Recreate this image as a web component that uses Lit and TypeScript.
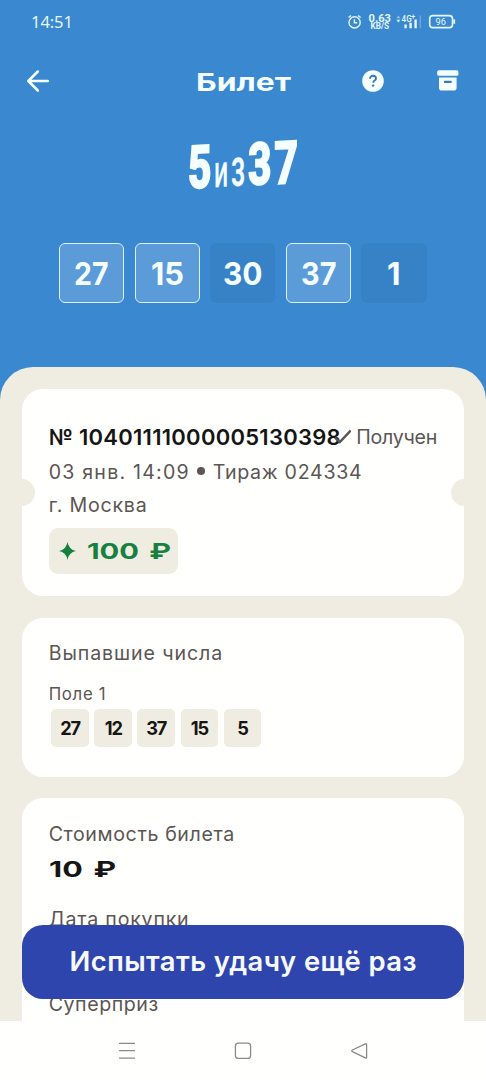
import { LitElement, html, css, svg } from "lit";
import { customElement, property } from "lit/decorators.js";

/** One line of text set to a given advance width, by tracking or by stretching. */
@customElement("fit-text")
class FitText extends LitElement {
  @property({ type: Number }) width = 100;
  @property() mode = "track";
  @property() text = "";

  static styles = css`
    :host { display: inline-block; white-space: pre; }
    .run { display: inline-block; transform-origin: 0 50%; }
  `;

  updated() {
    const run = this.renderRoot.querySelector<HTMLElement>(".run")!;
    run.style.letterSpacing = this.mode === "track" ? "0px" : "";
    run.style.transform = "";
    const natural = run.getBoundingClientRect().width;
    if (this.mode === "track") {
      run.style.letterSpacing = (this.width - natural) / Math.max(1, this.text.length - 1) + "px";
    } else {
      run.style.transform = `scaleX(${this.width / natural})`;
    }
    this.style.width = this.width + "px";
  }

  render() {
    return html`<span class="run">${this.text}</span>`;
  }
}

const track = (text: string, width: number, cls = "") =>
  html`<fit-text class=${cls} .text=${text} .width=${width}></fit-text>`;
const stretch = (text: string, width: number, cls = "") =>
  html`<fit-text class=${cls} mode="stretch" .text=${text} .width=${width}></fit-text>`;

@customElement("status-bar")
class StatusBar extends LitElement {
  static styles = css`
    :host { display: flex; height: 43px; align-items: center; padding: 0 30px 0 31px; color: #e4f7fb; box-sizing: border-box; }
    .time { font-family: "Noto Sans", sans-serif; font-size: 16.6px; flex: 1; }
    svg { display: block; overflow: visible; }
    text { font-family: Roboto, sans-serif; fill: #e4f7fb; }
  `;
  render() {
    return html`
      <span class="time">${track("14:51", 42)}</span>
      <svg width="110" height="24" viewBox="346 10 110 24" fill="none" stroke="#e4f7fb">
        <circle cx="354.600" cy="22.400" r="5.600" stroke-width="1.400" />
        <path d="M354.400 19.200v3.600h2.800M348.600 17.600l2.400-2.200M360.600 17.600l-2.400-2.200" stroke-width="1.400" />
        <g stroke="none">
          <text x="368.600" y="21.600" font-size="11.400" font-weight="700" textLength="22.400" lengthAdjust="spacingAndGlyphs">0.63</text>
          <text x="370.600" y="29.200" font-size="8.600" font-weight="700" textLength="18.600" lengthAdjust="spacingAndGlyphs">KB/S</text>
          <text x="401.600" y="22" font-size="8.800" font-weight="500" textLength="10" lengthAdjust="spacingAndGlyphs">4G</text>
          <text x="411.200" y="19.400" font-size="7" font-weight="700">+</text>
          <text x="435.600" y="25.400" font-size="9.800" textLength="10.400" lengthAdjust="spacingAndGlyphs">96</text>
        </g>
        <path d="M396.400 18.200l2-2.600 2 2.600z" fill="#93c2e6" stroke="none" />
        <path d="M396.400 19.800h4l-2 2.600z" fill="#e4f7fb" stroke="none" />
        <path d="M405.600 24.600v3.600M410.600 22.800v5.400M415.600 19.400v8.800" stroke-width="2.400" />
        <path d="M420.300 15.400v12.800" stroke="#6fa9dc" stroke-width="1.400" />
        <rect x="429.700" y="15.600" width="22.800" height="12" rx="3.200" stroke-width="1.600" />
        <path d="M454.200 19.400v4.400" stroke-width="1.800" />
      </svg>
    `;
  }
}

@customElement("game-logo")
class GameLogo extends LitElement {
  static styles = css`
    :host { display: block; height: 52px; }
    svg { display: block; margin: 0 auto; overflow: visible; }
    text { font-family: Roboto, sans-serif; fill: #f4feff; stroke: #f4feff; stroke-linejoin: miter; }
  `;
  glyph(ch: string, x: number, y: number, size: number, sx: number, weight: number, stroke: number) {
    return svg`<text transform="translate(${x} ${y}) skewY(-3) scale(${sx} 1)" font-size=${size} font-weight=${weight} stroke-width=${stroke}>${ch}</text>`;
  }
  render() {
    return html`
      <svg width="114" height="52" viewBox="186 139 114 52">
        ${this.glyph("5", 188, 188, 58.5, 0.69, 700, 2.6)}
        ${this.glyph("И", 214.6, 187.2, 34, 0.56, 700, 0.2)}
        ${this.glyph("З", 231.2, 186.2, 39.5, 0.56, 700, 0.2)}
        ${this.glyph("3", 248.2, 184.6, 57.5, 0.7, 700, 2.6)}
        ${this.glyph("7", 274.6, 183.4, 58, 0.7, 700, 2.6)}
      </svg>
    `;
  }
}

@customElement("app-root")
class AppRoot extends LitElement {
  static styles = css`
    :host {
      display: flex; flex-direction: column; position: relative; box-sizing: border-box;
      width: 486px; height: 1080px; overflow: hidden;
      background: #3a88d0; font-family: Inter, "Noto Sans", sans-serif; color: #5b5553;
    }
    svg { display: block; }
    status-bar { flex: none; }
    .bar { flex: none; height: 76px; display: grid; grid-template-columns: 196px 95px 1fr auto; align-items: center; padding-right: 26px; color: #f4feff; }
    .back { margin-left: 26px; }
    .help { margin-left: 69.5px; }
    .title { font: 700 24.6px/36px Inter, sans-serif; padding-top: 1px; }
    .logo { flex: none; margin-top: 20px; }
    .picks { flex: none; display: flex; gap: 10.3px; margin: 52px 0 0 59px; }
    .pick { flex: none; width: 65.3px; height: 59.6px; box-sizing: border-box; border-radius: 6px; background: #3782c6; display: flex; align-items: center; justify-content: center; font-size: 31.6px; font-weight: 700; line-height: 60px; color: #f4feff; padding-top: 3px; }
    .hit { background: #5b9bd7; border: 1.5px solid #d9f1f7; }
    .sheet { flex: 1; min-height: 0; overflow: hidden; margin-top: 64.7px; border-radius: 33px 33px 0 0; background: #efede2; padding: 21.7px 21.7px 0; display: flex; flex-direction: column; gap: 21.6px; }
    .card { flex: none; background: #fffffe; border-radius: 21px; box-sizing: border-box; padding: 0 27px; }
    .ticket { position: relative; height: 207px; padding-top: 31px; overflow: hidden; }
    .ticket::before, .ticket::after { content: ""; position: absolute; top: 90px; width: 27px; height: 27px; border-radius: 50%; background: #efede2; }
    .ticket::before { left: -14px; }
    .ticket::after { right: -14px; }
    .head { display: flex; height: 35px; align-items: center; white-space: nowrap; }
    .number { font-size: 22px; font-weight: 600; color: #151515; }
    .check { margin: 0 5px 0 -7px; }
    .line { height: 34px; line-height: 34px; font-size: 19.6px; display: flex; align-items: center; }
    .dot { width: 8px; height: 8px; border-radius: 50%; background: #5b5553; margin: 0 8px 1px; }
    .city { height: 33px; line-height: 34px; }
    .prize { margin-top: 6px; width: 129.5px; height: 46.3px; box-sizing: border-box; border-radius: 9px; background: #efede2; padding-left: 10px; display: flex; align-items: center; gap: 11px; font: 700 21.6px/48px Inter, sans-serif; word-spacing: 2.5px; color: #18803f; }
    .drawn { height: 159.2px; padding-top: 18.4px; }
    .field { margin-top: 8.6px; height: 30px; line-height: 30px; font-size: 16.8px; }
    .chips { display: flex; gap: 5.4px; padding: 0.6px 0 0 2.6px; }
    .chip { width: 37.7px; height: 37.7px; border-radius: 5px; background: #efede2; display: flex; align-items: center; justify-content: center; font-size: 18.2px; font-weight: 700; letter-spacing: -1.2px; color: #151515; padding-top: 1px; box-sizing: border-box; }
    .cost { height: 320px; padding-top: 18.4px; }
    .price { height: 36px; margin-bottom: 15.5px; font: 700 21.6px/37.6px Inter, sans-serif; word-spacing: 2.5px; color: #151515; }
    .later { margin-top: 50.3px; }
    .retry { position: absolute; left: 21.7px; right: 21.7px; top: 924.8px; height: 74px; border: 0; padding: 0; border-radius: 21px; background: #2f45ae; color: #f6faff; font: 600 27.4px/77px Inter, sans-serif; display: flex; justify-content: center; align-items: center; }
    .nav { flex: none; height: 59.4px; background: #fffffe; }
  `;

  picks = [
    { n: "27", w: 34.5, hit: true },
    { n: "15", w: 33, hit: true },
    { n: "30", w: 39.5, hit: false },
    { n: "37", w: 35.5, hit: true },
    { n: "1", w: 13.5, hit: false },
  ];
  drawn = ["27", "12", "37", "15", "5"];

  render() {
    return html`
      <status-bar></status-bar>
      <header class="bar">
        <svg class="back" width="24" height="24" viewBox="0 0 24 24" fill="none" stroke="#f4feff" stroke-width="2.500" stroke-linecap="round" stroke-linejoin="round">
          <path d="M21.800 12H2.500M11.800 2.500L2.300 12L11.800 21.500" />
        </svg>
        ${stretch("Билет", 95, "title")}
        <svg class="help" width="24" height="24" viewBox="0 0 24 24">
          <circle cx="12" cy="12" r="10.800" fill="#f4feff" />
          <path d="M9 9.800c0-1.900 1.300-3 3-3s3 1 3 2.600c0 2.200-2.800 2.200-2.800 4.400" fill="none" stroke="#3a78b8" stroke-width="1.900" />
          <circle cx="12.100" cy="16.600" r="1.200" fill="#3a78b8" />
        </svg>
        <svg width="24" height="24" viewBox="0 0 24 24" fill="#f4feff">
          <rect x="1.200" y="1.200" width="21.200" height="5.600" rx="1.600" />
          <path d="M3 8.400h17.600v10.400a2.800 2.800 0 0 1-2.800 2.800H5.800A2.800 2.800 0 0 1 3 18.800z" />
          <rect x="7.800" y="11.800" width="8" height="2.300" rx="1" fill="#3a78b8" />
        </svg>
      </header>
      <game-logo class="logo"></game-logo>
      <div class="picks">
        ${this.picks.map((p) => html`<div class="pick ${p.hit ? "hit" : ""}">${stretch(p.n, p.w)}</div>`)}
      </div>
      <main class="sheet">
        <section class="card ticket">
          <div class="head">
            ${track("№ 10401111000005130398", 292, "number")}
            <svg class="check" width="18" height="16" viewBox="0 0 18 16" fill="none" stroke="#5b5553" stroke-width="2.500">
              <path d="M1 8.600l5 4.600L17 1.400" />
            </svg>
            <div class="line">${track("Получен", 81)}</div>
          </div>
          <div class="line">
            ${track("03 янв. 14:09", 140)}<span class="dot"></span>${track("Тираж 024334", 149)}
          </div>
          <div class="line city">${track("г. Москва", 98)}</div>
          <div class="prize">
            <svg width="17" height="18" viewBox="0 0 17 18" fill="#18803f">
              <path d="M8.500 0Q9.800 7.600 17 9Q9.800 10.400 8.500 18Q7.200 10.400 0 9Q7.200 7.600 8.500 0z" />
            </svg>
            ${stretch("100 ₽", 84)}
          </div>
        </section>
        <section class="card drawn">
          <div class="line">${track("Выпавшие числа", 173.5)}</div>
          <div class="field">${track("Поле 1", 57)}</div>
          <div class="chips">${this.drawn.map((n) => html`<span class="chip">${n}</span>`)}</div>
        </section>
        <section class="card cost">
          <div class="line">${track("Стоимость билета", 185.5)}</div>
          <div class="price">${stretch("10 ₽", 67)}</div>
          <div class="line">${track("Дата покупки", 140)}</div>
          <div class="line later">${track("Суперприз", 109.5)}</div>
        </section>
      </main>
      <button class="retry">${track("Испытать удачу ещё раз", 347)}</button>
      <footer class="nav">
        <svg width="486" height="59" viewBox="0 1020.600 486 59" fill="none" stroke="#8a8a8a" stroke-width="1.300">
          <path d="M119 1043h16M119 1050.300h16M119 1057.700h16" />
          <rect x="235.400" y="1042.800" width="15.200" height="15.200" rx="3" />
          <path d="M366.600 1044.200v12.400q0 1.400-1.300.8l-12.900-6.200q-1.400-.8 0-1.600l12.900-6.200q1.300-.6 1.300.8z" />
        </svg>
      </footer>
    `;
  }
}
